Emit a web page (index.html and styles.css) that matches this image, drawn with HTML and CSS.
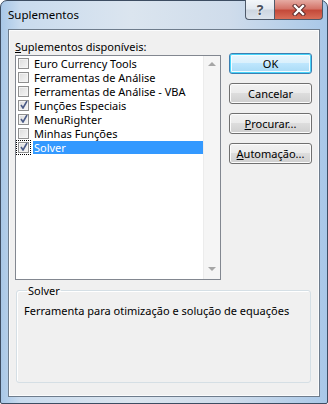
FILE: index.html
```html
<!DOCTYPE html>
<html lang="pt">
<head>
    <meta charset="UTF-8">
    <title>Suplementos</title>
    <link rel="stylesheet" href="styles.css">
</head>
<body>

    <div class="window">
        <div class="titlebar">
            <span class="title">Suplementos</span>
            <div class="caption-buttons">
                <span class="cap help">?</span>
                <span class="cap close">
                    <svg width="14" height="12" viewBox="0 0 14 12">
                        <path d="M3 2 L11 10 M11 2 L3 10" stroke="#5a2a2a" stroke-width="4.4" stroke-linecap="square"/>
                        <path d="M3 2 L11 10 M11 2 L3 10" stroke="#fff" stroke-width="2.4" stroke-linecap="square"/>
                    </svg>
                </span>
            </div>
        </div>

        <div class="client">
            <div class="top">
                <div class="left">
                    <div class="label"><u>S</u>uplementos disponíveis:</div>
                    <div class="listbox">
                        <div class="items">
                            <div class="row"><span class="box"></span><span class="text">Euro Currency Tools</span></div>
                            <div class="row"><span class="box"></span><span class="text">Ferramentas de Análise</span></div>
                            <div class="row"><span class="box"></span><span class="text">Ferramentas de Análise - VBA</span></div>
                            <div class="row"><span class="box checked"></span><span class="text">Funções Especiais</span></div>
                            <div class="row"><span class="box checked"></span><span class="text">MenuRighter</span></div>
                            <div class="row"><span class="box"></span><span class="text">Minhas Funções</span></div>
                            <div class="row selected"><span class="box checked"></span><span class="text">Solver</span></div>
                        </div>
                        <div class="scrollbar">
                            <span class="arrow up"></span>
                            <span class="arrow down"></span>
                        </div>
                    </div>
                </div>
                <div class="buttons">
                    <button class="default">OK</button>
                    <button>Cancelar</button>
                    <button><u>P</u>rocurar...</button>
                    <button><u>A</u>utomação...</button>
                </div>
            </div>

            <fieldset class="group">
                <legend>Solver</legend>
                <p>Ferramenta para otimização e solução de equações</p>
            </fieldset>
        </div>
    </div>

</body>
</html>
```

FILE: styles.css
```css
body { margin: 0; font-family: "Segoe UI", "Noto Sans", sans-serif; font-size: 11px; color: #000; background: #fff; }
.window { width: 326px; height: 402px; border: 1px solid #3d4d62; border-radius: 7px 7px 2px 2px; background: linear-gradient(90deg, #a8c7e7 0%, #c9dbee 6%, #dbe5ef 40%, #cfdceb 70%, #a9c8e8 100%); display: flex; flex-direction: column; }
.titlebar { height: 28px; display: flex; justify-content: space-between; align-items: flex-start; padding-left: 7px; }
.title { margin-top: 7px; font-size: 11.5px; line-height: 14px; color: #000; }
.caption-buttons { display: flex; margin-right: 4px; margin-top: -1px; }
.cap { height: 19px; border: 1px solid #4f5a6a; border-top: none; display: flex; align-items: center; justify-content: center; }
.help { width: 28px; border-radius: 0 0 0 4px; border-right: none; background: linear-gradient(#f3f6f9 0%, #e2e8ef 48%, #cdd6e0 52%, #dbe3ec 100%); font-weight: bold; font-size: 14px; color: #4a5260; text-shadow: 0 0 1px #fff, 0 0 2px #fff; }
.close { width: 47px; border-radius: 0 0 4px 0; background: linear-gradient(#e6aba3 0%, #d4756a 45%, #c44a3a 55%, #d86e58 100%); }
.client { flex: 1; margin: 0 7px 6px; border: 1px solid #6e7c8c; background: #f0f0f0; padding: 9px 7px 0 6px; box-shadow: inset 0 0 0 1px #fbfcfd; }
.top { display: flex; }
.left { width: 207px; }
.label { height: 16px; line-height: 15px; }
.listbox { height: 223px; border: 1px solid #828790; background: #fff; display: flex; }
.items { flex: 1; }
.row { height: 14px; display: flex; align-items: center; padding-left: 2px; }
.box { width: 9px; height: 9px; border: 1px solid #8f8f8f; background: linear-gradient(135deg, #dcdcdc, #f6f6f6); box-shadow: inset 0 0 0 1px #f4f4f4; margin-right: 4px; position: relative; }
.box.checked::after { content: ""; position: absolute; left: 1px; top: 0px; width: 8px; height: 8px; background: url("data:image/svg+xml;utf8,<svg xmlns='http://www.w3.org/2000/svg' width='8' height='8'><path d='M1 4 L3 7 L7 0' fill='none' stroke='%234a5a86' stroke-width='1.6'/></svg>") no-repeat; }
.text { line-height: 13px; padding: 0 2px 0 1px; flex: 1; white-space: nowrap; }
.selected .box { outline: 1px dotted #000; outline-offset: 1px; }
.selected .text { background: #3399ff; color: #fff; height: 13px; }
.scrollbar { width: 17px; background: #f5f5f5; border-left: 1px solid #ececec; display: flex; flex-direction: column; justify-content: space-between; align-items: center; padding: 6px 0 8px; box-sizing: border-box; }
.arrow { width: 0; height: 0; border-left: 4px solid transparent; border-right: 4px solid transparent; }
.arrow.up { border-bottom: 4px solid #a6a6a6; }
.arrow.down { border-top: 4px solid #a6a6a6; }
.buttons { display: flex; flex-direction: column; gap: 9px; margin-left: 8px; margin-top: 14px; }
button { width: 83px; height: 21px; font-family: inherit; font-size: 11px; color: #000; border: 1px solid #707070; border-radius: 3px; background: linear-gradient(#f2f2f2 0%, #ebebeb 49%, #dddddd 50%, #cfcfcf 100%); box-shadow: inset 0 0 0 1px #fcfcfc; padding: 0; }
button.default { border-color: #3c7fb1; box-shadow: inset 0 0 0 1px #48d4fa, inset 0 0 0 2px #f6fcfe; background: linear-gradient(#eaf6fd 0%, #d9f0fc 49%, #bee6fd 50%, #a7d9f5 100%); }
.group { margin: 3px 1px 0 1px; height: 88px; border: 1px solid #d5dfe5; border-radius: 3px; padding: 5px 7px; box-shadow: inset 1px 1px 0 #fff; }
.group legend { padding: 0 1px; margin-left: 3px; line-height: 15px; }
.group p { margin: 0; line-height: 15px; }
```
